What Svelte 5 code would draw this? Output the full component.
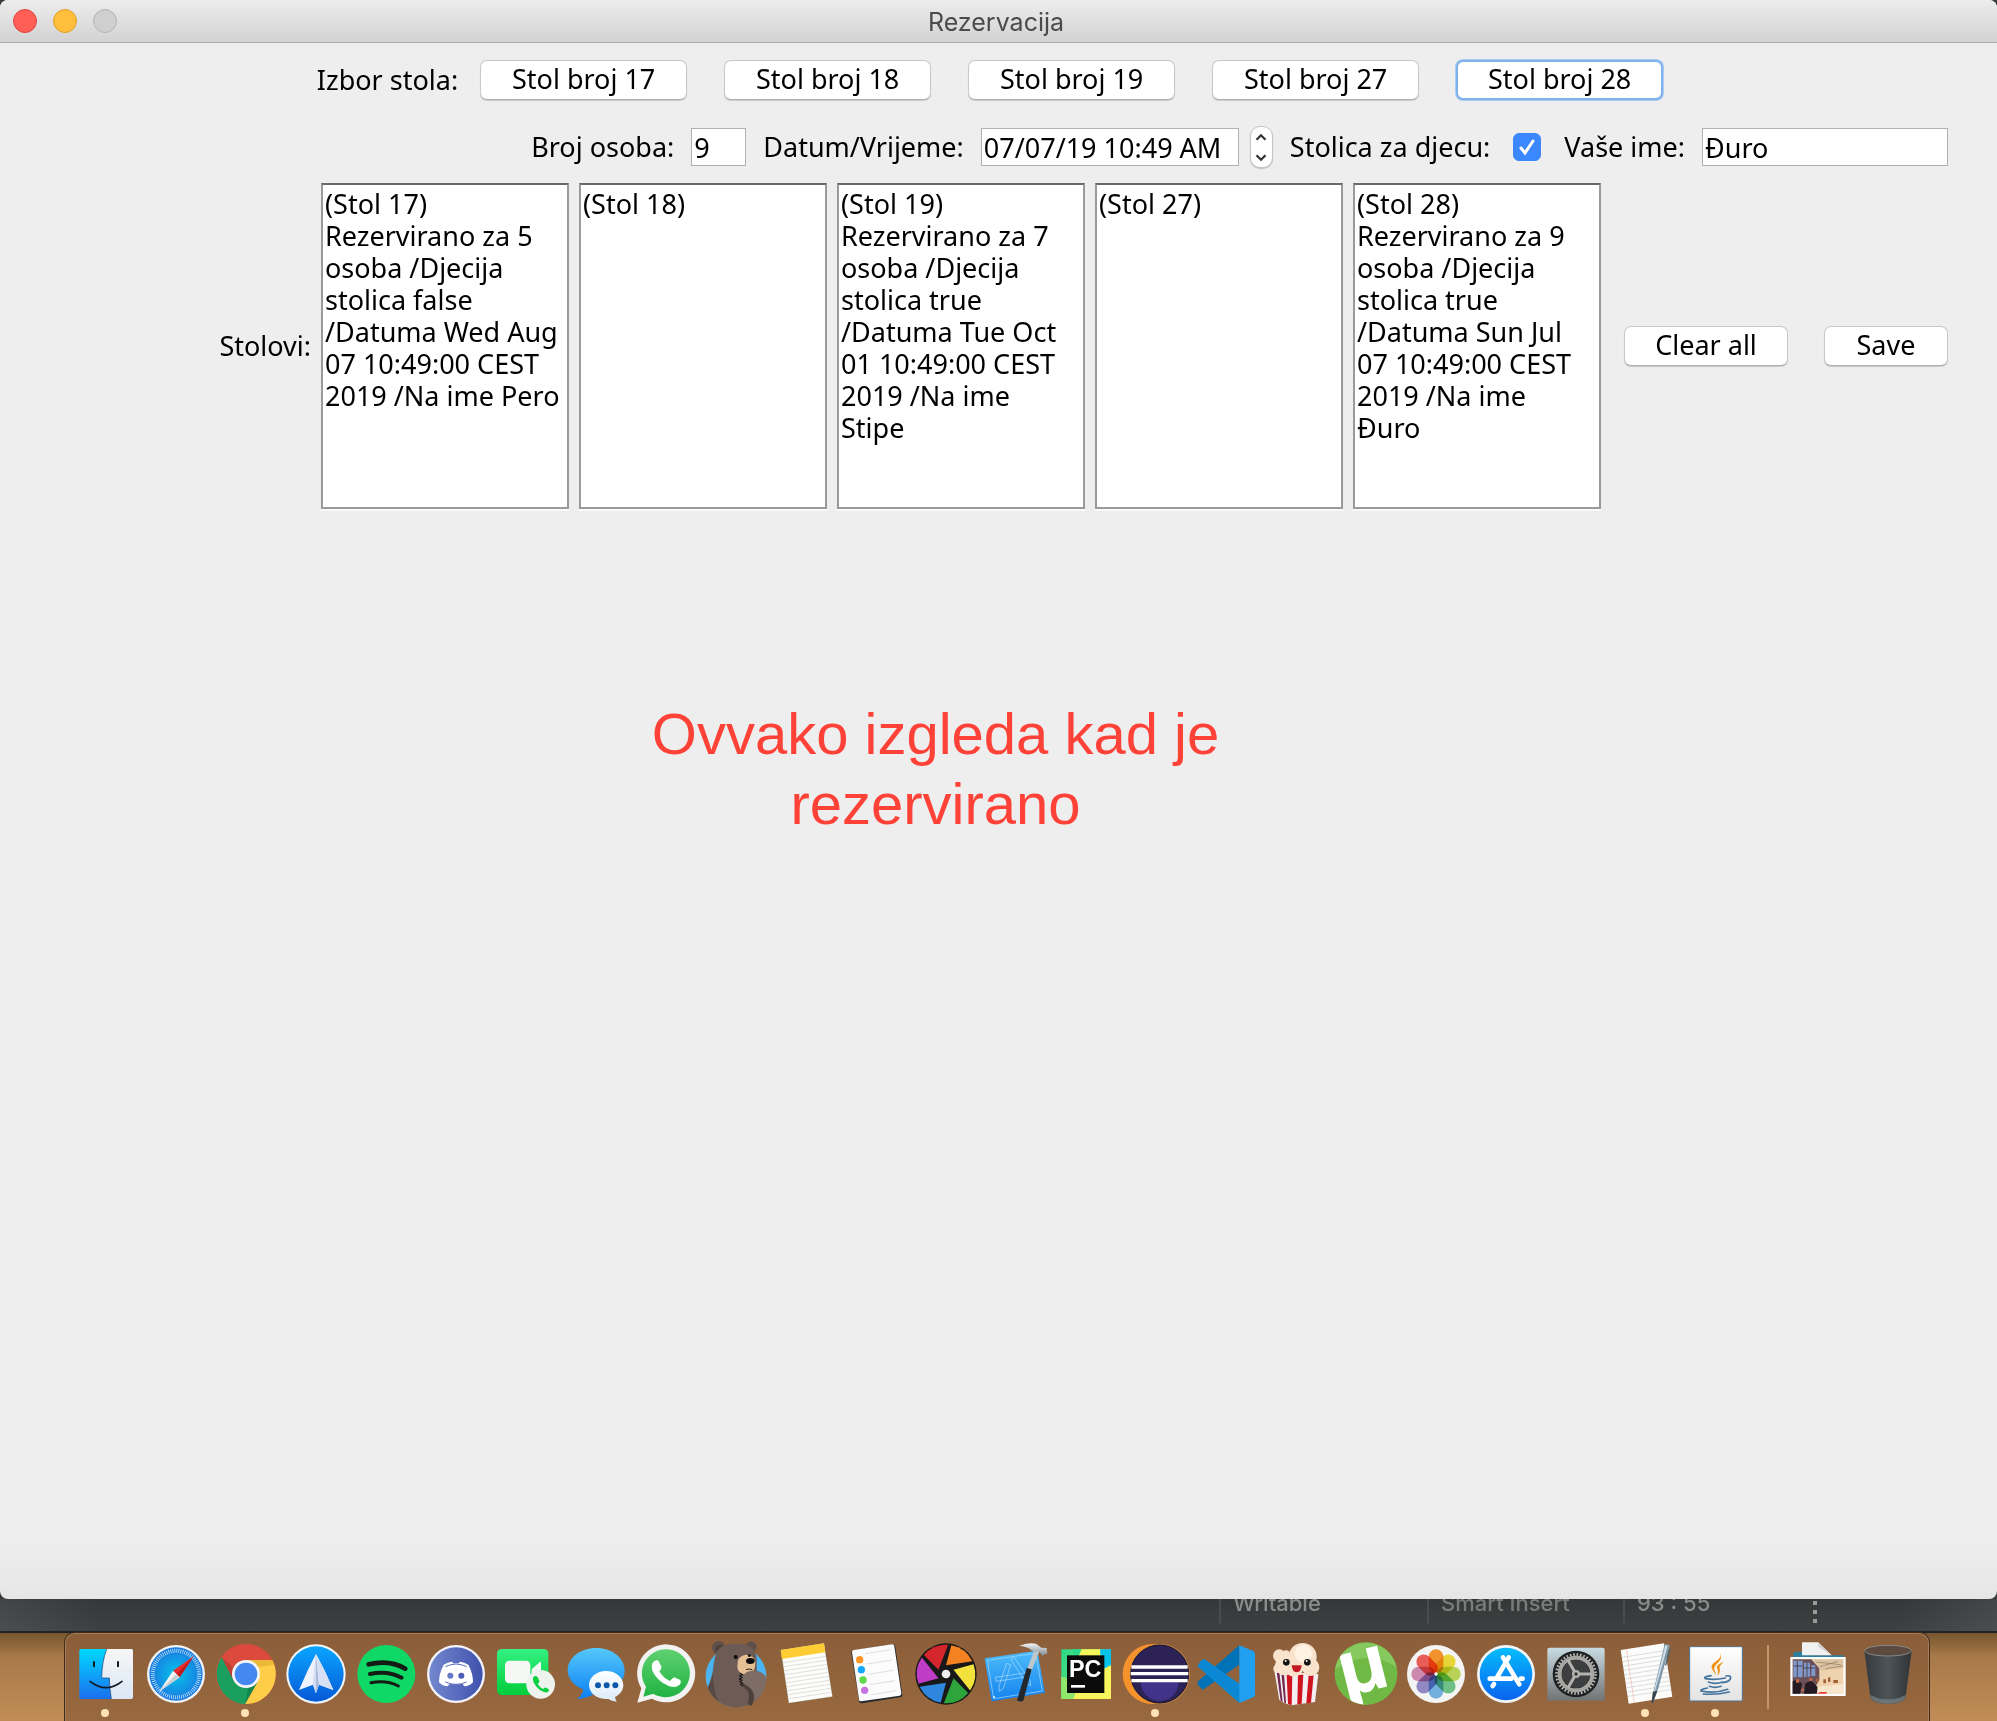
<script>
  const tables = [
    { no: 17, text: '(Stol 17)\nRezervirano za 5\nosoba /Djecija\nstolica false\n/Datuma Wed Aug\n07 10:49:00 CEST\n2019 /Na ime Pero' },
    { no: 18, text: '(Stol 18)' },
    { no: 19, text: '(Stol 19)\nRezervirano za 7\nosoba /Djecija\nstolica true\n/Datuma Tue Oct\n01 10:49:00 CEST\n2019 /Na ime\nStipe' },
    { no: 27, text: '(Stol 27)' },
    { no: 28, text: '(Stol 28)\nRezervirano za 9\nosoba /Djecija\nstolica true\n/Datuma Sun Jul\n07 10:49:00 CEST\n2019 /Na ime\nĐuro' }
  ];
  let selected = $state(28);
  let guests = $state('9');
  let when = $state('07/07/19 10:49 AM');
  let childSeat = $state(true);
  let name = $state('Đuro');

  const blades = ['#f58220', '#f3e23c', '#2ea53b', '#2f86dc', '#bf3cc6', '#d5252d'];
  const petals = ['#fb9a2e', '#f3e03a', '#bfdc5a', '#74c98d', '#78b7e6', '#9a8fcb', '#d68fb5', '#f4635c'];
  const lines = [0, 1, 2, 3, 4, 5, 6, 7, 8, 9];
</script>

{#snippet finder()}
  <g>
    <defs>
      <linearGradient id="fa" x2="0" y2="1"><stop stop-color="#00d9ff" /><stop offset="1" stop-color="#1b6ff0" /></linearGradient>
      <linearGradient id="fb" x2="0" y2="1"><stop stop-color="#f8f6f6" /><stop offset="1" stop-color="#d9e7f6" /></linearGradient>
    </defs>
    <rect x="238" y="207" width="161" height="150" rx="5" fill="url(#fa)" />
    <path d="M320 207H394Q399 207 399 212V352Q399 357 394 357H334Q329 328 328 294H305Q306 245 320 207Z" fill="url(#fb)" />
    <path d="M320 207Q306 245 305 294H328Q329 328 334 357" fill="none" stroke="#14406e" stroke-width="2" />
    <path d="M282 246V259M354 246V259" stroke="#111a26" stroke-width="6" stroke-linecap="round" />
    <path d="M270 304Q318 342 366 304" fill="none" stroke="#111a26" stroke-width="5" stroke-linecap="round" />
  </g>
{/snippet}

{#snippet safari()}
  <g>
    <defs><radialGradient id="sa"><stop stop-color="#04c4ea" /><stop offset="1" stop-color="#1b78e0" /></radialGradient></defs>
    <circle cx="528" cy="282" r="87" fill="#f1f3f5" />
    <circle cx="528" cy="282" r="80" fill="url(#sa)" />
    <circle cx="528" cy="282" r="70" fill="none" stroke="#d8f2ff" stroke-width="12" stroke-dasharray="2 4.1" />
    <path d="M581 229L519 272L539 292Z" fill="#ee2a2a" />
    <path d="M581 229L529 282L539 292Z" fill="#c01d1d" />
    <path d="M477 335L519 272L539 292Z" fill="#f4f4f4" />
    <path d="M477 335L529 282L539 292Z" fill="#c9ced2" />
  </g>
{/snippet}

{#snippet chrome()}
  <g>
    <circle cx="738" cy="282" r="90" fill="#dc4a3d" />
    <path d="M738 240H817A90 90 0 0 1 735 372L774 303Z" fill="#ffce48" />
    <path d="M665 232A90 90 0 0 0 735 372L774 303H702Z" fill="#1a9f5f" />
    <path d="M665 232L702 303L708 270Z" fill="#a8382f" opacity=".6" />
    <path d="M738 240H817L822 254L772 262Z" fill="#c98f20" opacity=".35" />
    <path d="M735 372L774 303L745 322Z" fill="#0c6b3e" opacity=".5" />
    <circle cx="738" cy="282" r="42" fill="#f5f6f8" />
    <circle cx="738" cy="282" r="34" fill="#4688f1" />
  </g>
{/snippet}

{#snippet spark()}
  <g>
    <defs><linearGradient id="ka" x2="0" y2="1"><stop stop-color="#0aa5ff" /><stop offset="1" stop-color="#0659d6" /></linearGradient></defs>
    <circle cx="948" cy="282" r="89" fill="#f3f7fb" />
    <circle cx="948" cy="282" r="83" fill="url(#ka)" />
    <path d="M948 222Q976 272 1000 330L957 314L948 340L939 314L897 330Q921 272 948 222Z" fill="#eef3fd" />
    <path d="M948 222L957 314L948 340L939 314Z" fill="#a9b9dd" />
    <path d="M948 222V340L939 314Z" fill="#d5def2" />
    <path d="M948 222Q976 272 1000 330L957 314Z" fill="#d6e0f5" />
  </g>
{/snippet}

{#snippet spotify()}
  <g>
    <circle cx="1159" cy="282" r="87" fill="#0fd866" />
    <g fill="none" stroke="#141a14" stroke-linecap="round">
      <path d="M1106 253Q1168 238 1216 266" stroke-width="14" />
      <path d="M1110 282Q1162 270 1205 293" stroke-width="12" />
      <path d="M1113 308Q1160 299 1195 318" stroke-width="9" />
    </g>
  </g>
{/snippet}

{#snippet discord()}
  <g>
    <defs><linearGradient id="da"><stop stop-color="#7488cf" /><stop offset="1" stop-color="#3f51ad" /></linearGradient></defs>
    <circle cx="1368" cy="282" r="87" fill="#f4f5fa" />
    <circle cx="1368" cy="282" r="80" fill="url(#da)" />
    <path d="M1331 254Q1343 246 1356 245L1360 250Q1368 249 1376 250L1380 245Q1393 246 1405 254Q1419 280 1419 307Q1408 319 1393 319L1387 311Q1368 315 1349 311L1343 319Q1328 319 1317 307Q1317 280 1331 254Z" fill="#fff" />
    <path d="M1336 260Q1368 244 1400 260M1336 306Q1368 320 1400 306" fill="none" stroke="#5c6fc0" stroke-width="3" />
    <circle cx="1351" cy="287" r="9" fill="#6579c6" /><circle cx="1384" cy="287" r="9" fill="#4b5db6" />
  </g>
{/snippet}

{#snippet facetime()}
  <g>
    <defs><linearGradient id="ta" x2="0" y2="1"><stop stop-color="#34f182" /><stop offset="1" stop-color="#02cd3b" /></linearGradient></defs>
    <rect x="51" y="207" width="154" height="138" rx="14" fill="url(#ta)" />
    <rect x="75" y="242" width="76" height="68" rx="13" fill="#f6f8f6" />
    <path d="M155 268L180 246Q183 244 183 249V303Q183 308 179 305L155 285Z" fill="#f6f8f6" />
    <circle cx="182" cy="313" r="43" fill="#eef3ee" />
    <path d="M160 292Q167 284 173 292L178 302Q180 307 173 311Q178 321 189 327Q194 321 199 323L206 328Q209 332 204 336Q192 341 173 324Q154 304 160 292Z" fill="#08cf40" />
  </g>
{/snippet}

{#snippet messages()}
  <g>
    <defs>
      <linearGradient id="ma" x2="0" y2="1"><stop stop-color="#55c8fb" /><stop offset="1" stop-color="#0d80f5" /></linearGradient>
      <linearGradient id="mb" x2="0" y2="1"><stop stop-color="#fff" /><stop offset="1" stop-color="#d9ebfa" /></linearGradient>
    </defs>
    <path d="M349 204C397 204 434 234 434 272C434 310 395 341 345 340Q322 356 291 357Q308 345 310 328C282 318 263 296 263 270C263 234 301 204 349 204Z" fill="url(#ma)" />
    <path d="M378 273C407 273 430 292 430 316C430 331 420 344 405 351Q406 360 411 365Q394 364 386 357C352 359 327 340 327 315C327 292 350 273 378 273Z" fill="url(#mb)" />
    <g fill="#0b59a8"><circle cx="354" cy="316" r="9" /><circle cx="380" cy="316" r="9" /><circle cx="406" cy="316" r="9" /></g>
  </g>
{/snippet}

{#snippet whatsapp()}
  <g>
    <defs><linearGradient id="wa" x2="0" y2="1"><stop stop-color="#5fd170" /><stop offset="1" stop-color="#20b342" /></linearGradient></defs>
    <path d="M472 368L484 325A87 87 0 1 1 516 356Z" fill="#f2f2f2" />
    <path d="M490 350L498 320A72 72 0 1 1 520 341Z" fill="url(#wa)" />
    <path d="M517 250Q524 238 534 241L544 259Q546 266 538 274Q549 294 570 303Q577 294 583 292L601 300Q605 307 598 315Q586 325 566 318Q530 302 517 272Q513 258 517 250Z" fill="#fff" />
  </g>
{/snippet}

{#snippet bear()}
  <g>
    <circle cx="768" cy="290" r="91" fill="#4bb5f3" />
    <circle cx="716" cy="203" r="20" fill="#5f504a" /><circle cx="813" cy="201" r="17" fill="#5f504a" />
    <circle cx="718" cy="206" r="11" fill="#4b3f3a" />
    <path d="M704 240Q706 192 767 190Q830 192 830 240V272Q858 280 859 300A91 91 0 0 1 683 322Q698 290 704 240Z" fill="#6c5c55" />
    <path d="M704 230Q700 300 683 322A91 91 0 0 0 715 364Q690 310 704 230Z" fill="#574943" />
    <path d="M773 248Q774 228 797 224Q822 226 826 245Q826 272 814 282Q790 288 775 272Q770 262 773 248Z" fill="#e6c095" />
    <ellipse cx="811" cy="243" rx="13" ry="9" fill="#0e0c0c" />
    <circle cx="767" cy="231" r="6" fill="#0e0c0c" /><circle cx="808" cy="227" r="4" fill="#0e0c0c" />
    <path d="M798 269Q808 265 817 269" fill="none" stroke="#2a2220" stroke-width="3" />
    <path d="M788 312Q826 330 809 375" fill="none" stroke="#4d413b" stroke-width="14" />
    <path d="M786 290Q800 270 825 272Q858 278 859 300Q856 340 824 362Q828 330 793 312Q784 305 786 290Z" fill="#7d6d65" />
    <path d="M780 280L788 284L778 288L788 293L777 297L787 301L778 305L788 309L780 314L790 316" fill="none" stroke="#15100e" stroke-width="3" />
  </g>
{/snippet}

{#snippet notes()}
  <g>
    <path d="M902 210L1032 190L1058 350L926 370Z" fill="#fdfdfb" stroke="#5c4a1c" stroke-width="1" />
    {#each lines as i}
      <path d={`M${909 + i * 2} ${248 + i * 12}l128 -19`} stroke="#cfcfcf" stroke-width="2" />
    {/each}
    <path d="M902 210L1032 190L1036 217L906 237Z" fill="#fdcd33" />
  </g>
{/snippet}

{#snippet reminders()}
  <g>
    <path d="M1121 218L1239 200L1260 345L1144 363Z" fill="#25282b" stroke="#25282b" stroke-width="14" stroke-linejoin="round" />
    <path d="M1122 216L1237 199L1258 341L1143 358Z" fill="#fcfcfc" stroke="#fcfcfc" stroke-width="12" stroke-linejoin="round" />
    <g stroke="#d0d0d0" stroke-width="2"><path d="M1155 221l76 -12M1160 252l76 -12M1164 283l76 -12M1169 314l76 -12M1174 344l76 -12" /></g>
    <circle cx="1139" cy="239" r="11" fill="#fd9426" /><circle cx="1144" cy="269" r="11" fill="#10a8fc" />
    <circle cx="1149" cy="300" r="11" fill="#5fd849" /><circle cx="1154" cy="331" r="11" fill="#c872e2" />
  </g>
{/snippet}

{#snippet aperture()}
  <g>
    <circle cx="198" cy="282" r="92" fill="#181818" />
    {#each blades as c, i}
      <path d="M16 -86A87 87 0 0 1 79 -38L0 -26Z" fill={c} transform={`translate(198 282) rotate(${i * 60})`} />
    {/each}
    <circle cx="198" cy="282" r="13" fill="#eee" />
  </g>
{/snippet}

{#snippet xcode()}
  <g>
    <defs>
      <linearGradient id="xa" x2="0" y2="1"><stop stop-color="#4dbcfa" /><stop offset="1" stop-color="#1482ee" /></linearGradient>
      <linearGradient id="xb" x2="0" y2="1"><stop stop-color="#f0f4f6" /><stop offset="1" stop-color="#7f8b93" /></linearGradient>
    </defs>
    <path d="M314 235L472 212L495 338L335 364Z" fill="url(#xa)" />
    <g fill="none" stroke="#a8dcff" stroke-width="2">
      <path d="M322 241L467 220L487 333L341 356Z" />
      <path d="M346 292L440 278L442 290L348 304ZM380 250L392 254L370 325L358 334L357 318ZM392 238L402 232L450 300L452 318L438 308Z" />
    </g>
    <path d="M340 348h4v6h-4z" fill="#fff" />
    <path d="M465 205L480 210L455 272L441 268Z" fill="#bcc7cd" />
    <path d="M440 264L455 268L430 362Q422 368 411 361Z" fill="#24282c" />
    <path d="M417 198Q440 187 468 191L484 203L500 204L502 220L487 227L478 215L456 212Q440 198 417 198Z" fill="url(#xb)" />
  </g>
{/snippet}

{#snippet pycharm()}
  <g>
    <defs><linearGradient id="pa" x2="1" y2=".4"><stop stop-color="#27d88a" /><stop offset="1" stop-color="#8ee86a" /></linearGradient></defs>
    <rect x="544" y="208" width="149" height="149" fill="url(#pa)" />
    <path d="M600 208H665L693 260V357H575Z" fill="#f6f55c" />
    <path d="M544 290V357H580L600 300Z" fill="#8fe86b" />
    <path d="M660 208H693V255L665 270Z" fill="#06c3ea" />
    <path d="M575 208L605 208L590 240Z" fill="#27d88a" />
    <rect x="561" y="226" width="112" height="113" fill="#0b0b0b" />
    <text x="567" y="291" class="pc">PC</text>
    <rect x="573" y="315" width="42" height="8" fill="#fff" />
  </g>
{/snippet}

{#snippet eclipse()}
  <g>
    <circle cx="818" cy="282" r="90" fill="#f6922c" />
    <circle cx="840" cy="282" r="90" fill="#c9894a" />
    <circle cx="839" cy="282" r="87" fill="#2c2255" stroke="#15122c" stroke-width="3" />
    <path d="M782 306A57 57 0 0 0 896 306Z" fill="#41338a" />
    <path d="M754 261H923M752 281H925M754 302H923" stroke="#fff" stroke-width="10" />
  </g>
{/snippet}

{#snippet vscode()}
  <g>
    <path d="M1078 196V254L975 325Q969 331 962 324L953 313Q950 307 956 302Z" fill="#0072b8" />
    <path d="M956 252L964 241Q970 235 977 240L1082 314L1078 369L956 262Q950 258 956 252Z" fill="#0a88d4" />
    <path d="M1078 196L1120 213Q1125 216 1125 221V344Q1125 349 1120 352L1078 369Z" fill="#21a0f2" />
  </g>
{/snippet}

{#snippet popcorn()}
  <g>
    <path d="M-17 272L115 283L105 366Q60 372 35 376Q10 370 -2 360Z" fill="#f3eef2" />
    <g fill="#cf1420">
      <path d="M20 284H37L35 376L24 372ZM54 284H70L65 371L52 373ZM86 284H101L93 368L79 370Z" />
    </g>
    <g fill="#71294d"><path d="M-10 276H-2L8 366L2 362ZM4 280H12L18 370L13 368Z" /></g>
    <g fill="#f9e3cd">
      <circle cx="-2" cy="227" r="19" /><circle cx="-7" cy="266" r="13" /><circle cx="15" cy="256" r="30" />
      <circle cx="68" cy="231" r="42" /><circle cx="92" cy="262" r="26" /><circle cx="42" cy="262" r="28" /><circle cx="18" cy="225" r="14" />
    </g>
    <circle cx="70" cy="220" r="26" fill="#fff3e4" />
    <circle cx="19" cy="247" r="10" fill="#111" /><circle cx="82" cy="247" r="10" fill="#111" />
    <circle cx="17" cy="243" r="3" fill="#fff" /><circle cx="80" cy="243" r="3" fill="#fff" />
    <path d="M35 256H65Q63 277 50 277Q37 277 35 256Z" fill="#c31824" />
  </g>
{/snippet}

{#snippet torrent()}
  <g>
    <defs><clipPath id="ua"><circle cx="258" cy="281" r="93" /></clipPath></defs>
    <circle cx="258" cy="281" r="94" fill="#70b944" />
    <path d="M165 270A94 94 0 0 1 350 262Q260 200 165 270Z" fill="#86c95e" />
    <g clip-path="url(#ua)"><text x="0" y="0" class="mu" transform="translate(191 352) rotate(-14)">µ</text></g>
  </g>
{/snippet}

{#snippet photos()}
  <g>
    <circle cx="468" cy="282" r="87" fill="#f4f4f4" />
    <g class="petals">
      {#each petals as c, i}
        <rect x="-22" y="-74" width="44" height="72" rx="22" fill={c} transform={`translate(468 282) rotate(${i * 45})`} />
      {/each}
    </g>
    <circle cx="468" cy="282" r="5" fill="#fff" />
  </g>
{/snippet}

{#snippet appstore()}
  <g>
    <defs><linearGradient id="aa" x2="0" y2="1"><stop stop-color="#04bdfd" /><stop offset="1" stop-color="#0a63ee" /></linearGradient></defs>
    <circle cx="678" cy="282" r="87" fill="#f2f5f8" />
    <circle cx="678" cy="282" r="79" fill="url(#aa)" />
    <g stroke="#fff" stroke-width="14" stroke-linecap="round" fill="none">
      <path d="M686 232L650 294M642 312L638 318M669 232L718 313M629 296H694M722 296H728" />
    </g>
  </g>
{/snippet}

{#snippet prefs()}
  <g>
    <defs><linearGradient id="ga" x2="0" y2="1"><stop stop-color="#c8dbe2" /><stop offset="1" stop-color="#737373" /></linearGradient></defs>
    <rect x="802" y="203" width="172" height="159" rx="6" fill="url(#ga)" />
    <circle cx="888" cy="282" r="70" fill="#202224" />
    <circle cx="888" cy="282" r="58" fill="none" stroke="#b4b4b0" stroke-width="9" stroke-dasharray="5 5.12" />
    <circle cx="888" cy="282" r="49" fill="none" stroke="#a5a5a1" stroke-width="12" />
    <circle cx="888" cy="282" r="42" fill="#3c3e3f" />
    <path d="M888 282H935M888 282L864 241M888 282L864 323" stroke="#b3b3af" stroke-width="9" />
    <circle cx="888" cy="282" r="12" fill="#b3b3af" /><circle cx="888" cy="282" r="5" fill="#333" />
  </g>
{/snippet}

{#snippet textedit()}
  <g>
    <path d="M1022 210L1152 190L1177 350L1046 371Z" fill="#fcfcfa" />
    {#each lines as i}
      <path d={`M${1026 + i * 2} ${232 + i * 13}l130 -20`} stroke="#c9cdd2" stroke-width="2" />
    {/each}
    <path d="M1039 208L1063 368" stroke="#f3b5b5" stroke-width="2" />
    <path d="M1154 192L1170 195L1135 325L1118 371L1116 352Z" fill="#7f98a8" />
    <path d="M1156 196L1163 197L1126 330L1119 345Z" fill="#cfe0ea" />
    <path d="M1119 335L1132 332L1118 371L1115 365Z" fill="#3b444b" />
    <path d="M1170 207L1157 256" stroke="#4b6272" stroke-width="4" />
  </g>
{/snippet}

{#snippet java()}
  <g>
    <defs><linearGradient id="ja" x2="0" y2="1"><stop stop-color="#fff" /><stop offset="1" stop-color="#e3e3e3" /></linearGradient></defs>
    <rect x="269" y="200" width="158" height="163" rx="3" fill="url(#ja)" stroke="#4f7290" stroke-width="3" />
    <path d="M361 218Q366 232 348 244Q330 256 336 266Q342 278 349 286Q344 272 342 264Q344 256 354 248Q368 234 361 218Z" fill="#f29111" />
    <path d="M372 246Q352 252 350 262Q356 272 353 287Q362 276 359 264Q358 256 372 246Z" fill="#f29111" />
    <g fill="none" stroke="#44749c" stroke-width="5" stroke-linecap="round">
      <path d="M333 287Q308 291 316 296Q345 301 376 294M378 288Q396 285 391 297Q386 306 368 308M325 306Q345 314 368 306M328 319Q345 325 363 319M322 324Q300 328 303 333Q345 342 383 328M310 342Q350 345 388 336" />
    </g>
  </g>
{/snippet}

{#snippet folder()}
  <g>
    <path d="M580 222Q580 215 587 215H622L630 226H731V345H580Z" fill="#2f7f9f" />
    <path d="M606 187H655L695 226H606Z" fill="#f1f1f1" /><path d="M655 187Q662 200 672 204L695 226L655 200Z" fill="#cfcfcf" />
    <rect x="571" y="231" width="166" height="117" fill="#fff" />
    <rect x="578" y="238" width="152" height="103" fill="#efd2ae" />
    <path d="M578 238H634L658 262V300L634 341H578Z" fill="#6b5058" />
    <path d="M580 242H608V292H580ZM612 248H630V290H612ZM634 256H646V288H634Z" fill="#7f97c9" />
    <path d="M580 258H608M612 264H646M592 242V292M621 248V290" stroke="#33232c" stroke-width="2" />
    <path d="M634 238H730V264L664 272Z" fill="#dcc3a2" />
    <path d="M650 246L722 254M660 260L715 244M676 266L728 258" stroke="#8f7760" stroke-width="2" />
    <path d="M578 304L594 298L606 312L600 341H578ZM616 310L634 302L652 320V341H612Z" fill="#241a22" />
    <path d="M588 298h10v10h-10zM628 294h9v9h-9zM604 326h8v8h-8z" fill="#c46a48" />
    <path d="M648 296h8v10h-8zM670 298h8v12h-8zM684 292h7v14h-7zM700 300h14v9h-14z" fill="#a5623a" />
    <path d="M656 320L730 312V341H650Z" fill="#f8e6cc" />
    <path d="M650 341L660 336H680V341Z" fill="#e8413a" />
  </g>
{/snippet}

{#snippet trash()}
  <g>
    <defs><linearGradient id="ra"><stop stop-color="#343a3e" /><stop offset=".5" stop-color="#4e5457" /><stop offset="1" stop-color="#2f3437" /></linearGradient></defs>
    <path d="M793 212L811 350Q815 371 864 371Q913 371 917 350L935 212Z" fill="url(#ra)" />
    <path d="M811 345Q864 372 917 345Q918 371 864 371Q812 371 811 345Z" fill="#7b8488" opacity=".7" />
    <ellipse cx="864" cy="212" rx="70" ry="16" fill="#5d4a3e" stroke="#838a8d" stroke-width="3" />
  </g>
{/snippet}

{#snippet app(label, x, running, art)}
  <li>
    <button class="app" aria-label={label}>
      <svg viewBox={`${x} 168 210 252`} aria-hidden="true">
        {@render art()}
        {#if running}<circle cx={x + 102} cy="399" r="12" fill="#ffe3b8" />{/if}
      </svg>
    </button>
  </li>
{/snippet}

<div class="desktop">
  <main class="window">
    <header class="titlebar">
      <div class="lights">
        <button class="light close" aria-label="Close"></button>
        <button class="light minimize" aria-label="Minimize"></button>
        <button class="light zoom" aria-label="Zoom" disabled></button>
      </div>
      <h1>Rezervacija</h1>
    </header>

    <div class="content">
      <div class="row pick">
        <span class="caption">Izbor stola:</span>
        <div class="choices">
          {#each tables as t}
            <button class="btn wide" class:focused={selected === t.no} onclick={() => (selected = t.no)}>Stol broj {t.no}</button>
          {/each}
        </div>
      </div>

      <form class="row details" onsubmit={(e) => e.preventDefault()}>
        <label for="guests">Broj osoba:</label>
        <input id="guests" class="field small" type="text" bind:value={guests} />
        <label for="when">Datum/Vrijeme:</label>
        <div class="spinner">
          <input id="when" class="field date" type="text" bind:value={when} />
          <div class="stepper">
            <button type="button" aria-label="Up"><svg viewBox="0 0 12 8"><path d="M2 6L6 2L10 6" /></svg></button>
            <button type="button" aria-label="Down"><svg viewBox="0 0 12 8"><path d="M2 2L6 6L10 2" /></svg></button>
          </div>
        </div>
        <label for="seat">Stolica za djecu:</label>
        <span class="tick">
          <input id="seat" type="checkbox" bind:checked={childSeat} />
          <svg viewBox="0 0 28 28" aria-hidden="true"><path d="M8 15L12 20L20 8" /></svg>
        </span>
        <label for="name">Vaše ime:</label>
        <input id="name" class="field name" type="text" bind:value={name} />
      </form>

      <div class="row tables">
        <span class="caption">Stolovi:</span>
        <div class="areas">
          {#each tables as t}
            <textarea aria-label={`Stol ${t.no}`} spellcheck="false" value={t.text}></textarea>
          {/each}
        </div>
        <div class="actions">
          <button class="btn clear">Clear all</button>
          <button class="btn save">Save</button>
        </div>
      </div>

      <p class="remark">Ovvako izgleda kad je<br />rezervirano</p>
    </div>
  </main>

  <footer class="status">
    <span class="cell writable">Writable</span>
    <span class="cell insert">Smart Insert</span>
    <span class="cell caret">93 : 55</span>
    <span class="grip"><i></i><i></i><i></i></span>
  </footer>

  <nav class="shelf" aria-label="Dock">
    <ul class="dock">
      {@render app('Finder', 213, true, finder)}
      {@render app('Safari', 423, false, safari)}
      {@render app('Chrome', 633, true, chrome)}
      {@render app('Spark', 843, false, spark)}
      {@render app('Spotify', 1053, false, spotify)}
      {@render app('Discord', 1263, false, discord)}
      {@render app('FaceTime', 33, false, facetime)}
      {@render app('Messages', 243, false, messages)}
      {@render app('WhatsApp', 453, false, whatsapp)}
      {@render app('Bear', 663, false, bear)}
      {@render app('Notes', 873, false, notes)}
      {@render app('Reminders', 1083, false, reminders)}
      {@render app('Aperture', 93, false, aperture)}
      {@render app('Xcode', 303, false, xcode)}
      {@render app('PyCharm', 513, false, pycharm)}
      {@render app('Eclipse', 723, true, eclipse)}
      {@render app('Visual Studio Code', 933, false, vscode)}
      {@render app('Popcorn Time', -57, false, popcorn)}
      {@render app('uTorrent', 153, false, torrent)}
      {@render app('Photos', 363, false, photos)}
      {@render app('App Store', 573, false, appstore)}
      {@render app('System Preferences', 783, false, prefs)}
      {@render app('TextEdit', 993, true, textedit)}
      {@render app('Java', 243, true, java)}
      <li class="divider" aria-hidden="true"></li>
      {@render app('Pictures', 549, false, folder)}
      {@render app('Trash', 759, false, trash)}
    </ul>
  </nav>
</div>

<style>
  :global(body) {
    background: #2b2f31;
  }
  .desktop, .desktop * {
    box-sizing: border-box;
  }
  .desktop {
    display: flex;
    flex-direction: column;
    min-height: 100vh;
    font-family: 'Noto Sans', 'Open Sans', sans-serif;
    font-size: 27px;
    line-height: 32px;
    color: #000;
    background: #383c3d;
  }
  button, input, textarea {
    font: inherit;
    color: inherit;
    margin: 0;
  }
  .window {
    flex: 1;
    display: flex;
    flex-direction: column;
    border-radius: 8px;
    overflow: hidden;
    background: linear-gradient(to top, #e6e6e6, #eee 64px);
  }
  .titlebar {
    display: grid;
    grid-template-columns: 1fr auto 1fr;
    align-items: center;
    height: 43px;
    padding: 0 18px 0 13px;
    background: linear-gradient(#ededed, #d2d2d2);
    border-bottom: 1px solid #aeaeae;
  }
  .lights {
    display: flex;
    gap: 16px;
  }
  .light {
    width: 24px;
    height: 24px;
    padding: 0;
    border: 1px solid #e0443e;
    border-radius: 50%;
    background: #ff5f57;
  }
  .minimize {
    background: #ffbf3c;
    border-color: #dfa023;
  }
  .zoom {
    background: #cfcfcf;
    border-color: #b4b4b4;
  }
  h1 {
    margin: 0;
    padding-top: 2px;
    font: 400 25px/32px Inter, sans-serif;
    color: #4b4b4b;
  }
  .content {
    display: flex;
    flex-direction: column;
    padding: 17px 49px 0 0;
  }
  .row {
    display: flex;
    align-items: center;
    justify-content: flex-end;
  }
  .caption, label {
    white-space: nowrap;
  }
  .pick {
    justify-content: center;
    gap: 22px;
    padding-left: 32px;
  }
  .choices {
    display: flex;
    gap: 37px;
  }
  .btn {
    height: 40px;
    padding: 0 0 2px;
    border: 1px solid #c8c8c8;
    border-bottom-color: #adadad;
    border-radius: 7px;
    background: #fff;
    box-shadow: 0 1px 1px #00000026;
  }
  .wide {
    width: 207px;
  }
  .focused {
    border: 2px solid #7fb1ea;
    box-shadow: 0 0 0 1px #a9cdf3;
  }
  .details {
    gap: 17px;
    padding-top: 26px;
  }
  .field {
    height: 38px;
    padding: 0 2px;
    border: 1px solid #b0b0b0;
    border-radius: 0;
    background: #fff;
    outline: none;
  }
  .small {
    width: 55px;
  }
  .date {
    width: 258px;
  }
  .name {
    width: 246px;
  }
  .spinner {
    display: flex;
    align-items: center;
    gap: 11px;
  }
  .stepper {
    display: flex;
    flex-direction: column;
    width: 23px;
    height: 42px;
    border: 1px solid #c4c4c4;
    border-radius: 10px;
    background: #fff;
    box-shadow: 0 1px 1px #00000030;
  }
  .stepper button {
    flex: 1;
    display: grid;
    place-items: center;
    padding: 0;
    border: 0;
    background: none;
  }
  .stepper svg {
    width: 14px;
    height: 9px;
    fill: none;
    stroke: #333;
    stroke-width: 2;
  }
  .tick {
    display: grid;
    margin: 0 6px;
  }
  .tick input, .tick svg {
    grid-area: 1 / 1;
    width: 28px;
    height: 28px;
  }
  .tick input {
    appearance: none;
    border-radius: 6px;
    background: #fff;
    border: 1px solid #b0b0b0;
  }
  .tick input:checked {
    background: #3b88fd;
    border-color: #3b88fd;
  }
  .tick svg {
    pointer-events: none;
    fill: none;
    stroke: #fff;
    stroke-width: 3;
    stroke-linecap: round;
  }
  .tables {
    padding-top: 15px;
    gap: 10px;
  }
  .areas {
    display: flex;
    gap: 10px;
  }
  textarea {
    display: block;
    width: 248px;
    height: 326px;
    padding: 3px 0 0 2px;
    border: 2px solid #9a9a9a;
    border-top-color: #696969;
    border-radius: 0;
    background: #fff;
    box-shadow: 0 2px 0 #fafafa;
    resize: none;
    outline: none;
    overflow: hidden;
    white-space: pre;
  }
  .actions {
    display: flex;
    gap: 36px;
    padding-left: 13px;
  }
  .clear {
    width: 164px;
  }
  .save {
    width: 124px;
  }
  .remark {
    margin: 190px 77px 0 0;
    text-align: center;
    font: 400 58px/70px 'Liberation Sans', Arial, sans-serif;
    color: #ff4238;
  }
  .status {
    display: flex;
    justify-content: flex-end;
    height: 34px;
    padding-right: 180px;
    overflow: hidden;
    font: 500 22px/24px Inter, sans-serif;
    color: #8c8c8c;
    background:
      linear-gradient(90deg, #ffffff12, #ffffff00 100px, #ffffff00 calc(100% - 100px), #ffffff12),
      linear-gradient(#343839, #3d4142);
    border-bottom: 2px solid #202425;
  }
  .cell {
    display: flex;
    align-items: flex-end;
    height: 25px;
    padding: 0 0 9px 12px;
    border-left: 2px solid #484c4e;
    white-space: nowrap;
  }
  .writable {
    width: 208px;
  }
  .insert {
    width: 196px;
    color: #7c7c7a;
  }
  .caret {
    width: 190px;
  }
  .grip {
    display: flex;
    flex-direction: column;
    gap: 5px;
    padding-top: 2px;
  }
  .grip i {
    width: 4px;
    height: 4px;
    background: #9a9a96;
  }
  .shelf {
    display: flex;
    justify-content: center;
    height: 88px;
    padding-right: 4px;
    background: linear-gradient(#76552f, #a87a49 24px, #c18c57);
  }
  .dock {
    display: flex;
    margin: 0;
    padding: 2px 5px 0;
    list-style: none;
    border: 1px solid #a97c56;
    border-bottom: 0;
    border-radius: 10px 10px 0 0;
    background: linear-gradient(#8b5e3a, #99693f);
    box-shadow: 0 0 0 1px #3f2c1c;
  }
  .app {
    display: block;
    width: 70px;
    height: 84px;
    padding: 0;
    border: 0;
    background: none;
  }
  .app svg {
    display: block;
    width: 70px;
    height: 84px;
  }
  .divider {
    width: 2px;
    height: 64px;
    margin: 9px 14px 0 16px;
    background: #c69467;
  }
  .petals rect {
    mix-blend-mode: multiply;
  }
  .pc {
    font: 700 70px 'Liberation Sans', Arial, sans-serif;
    fill: #fff;
  }
  .mu {
    font: 700 230px 'Open Sans', sans-serif;
    fill: #fff;
  }
</style>
